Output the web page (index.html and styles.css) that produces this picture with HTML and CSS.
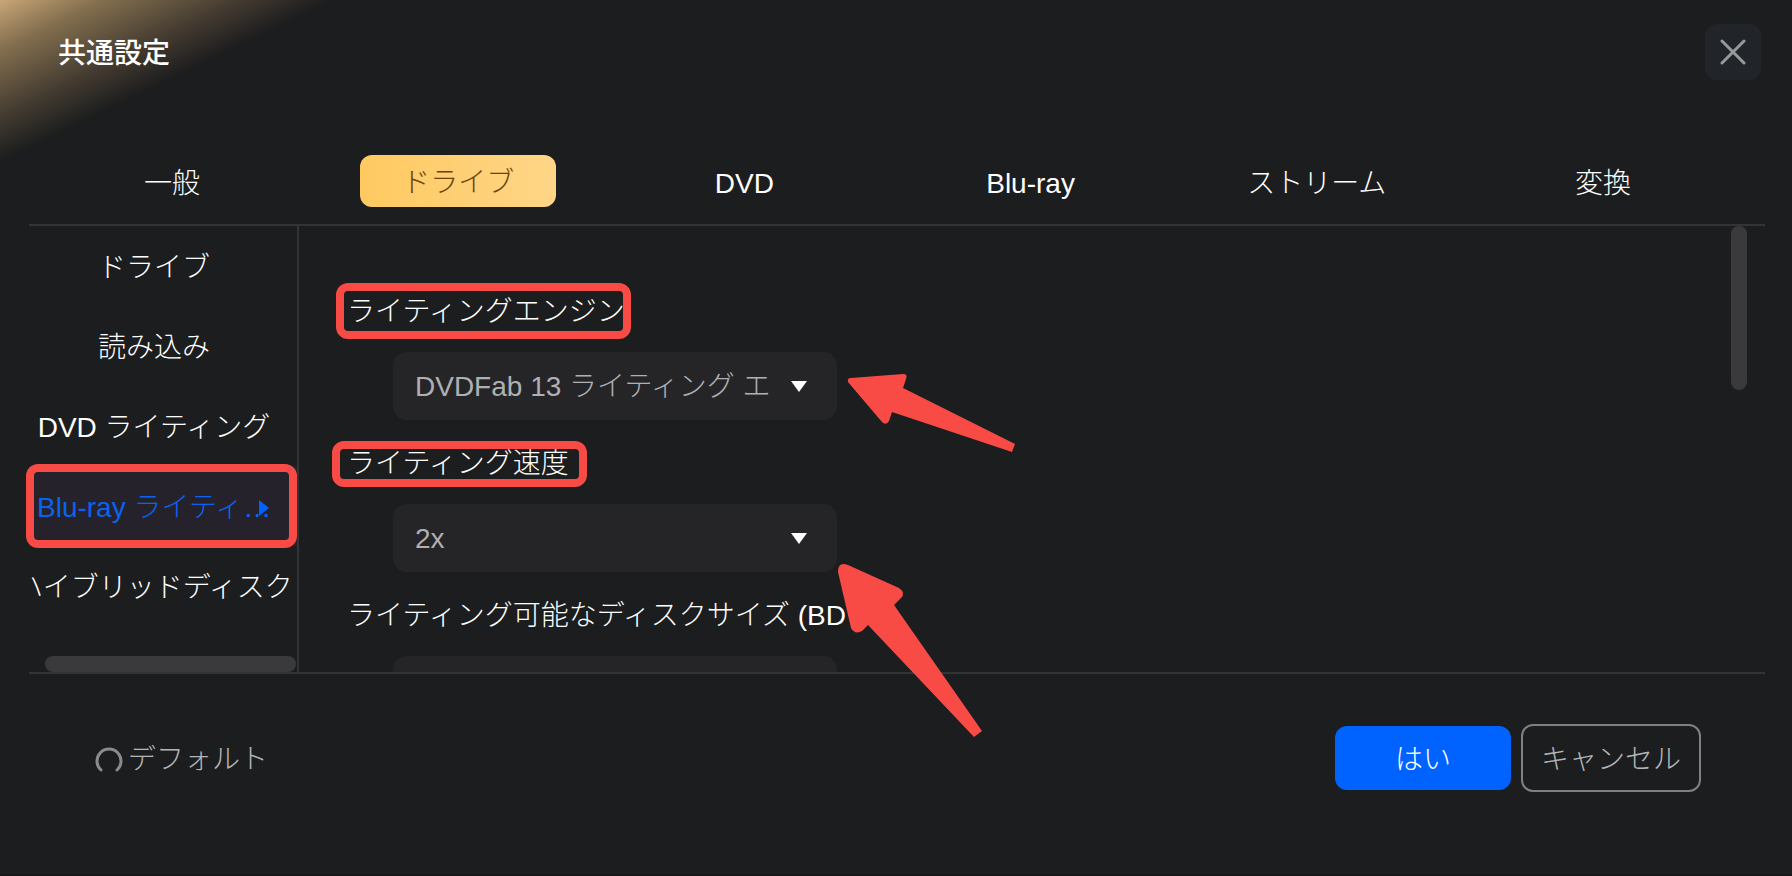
FILE: index.html
```html
<!DOCTYPE html>
<html lang="ja">
  <head>
    <meta charset="UTF-8" />
    <meta name="viewport" content="width=device-width, initial-scale=1.0" />
    <title>共通設定</title>
    <link rel="stylesheet" href="styles.css">
  </head>
  <body>
    <div class="dialog">
      <header class="dialog-header">
        <h1>共通設定</h1>
        <button type="button" class="close-button" aria-label="閉じる">
          <svg width="26" height="26" viewBox="0 0 26 26">
            <path d="M2 2 L24 24 M24 2 L2 24" />
          </svg>
        </button>
      </header>

      <nav class="tabs">
        <button type="button" class="tab">一般</button>
        <button type="button" class="tab active">ドライブ</button>
        <button type="button" class="tab">DVD</button>
        <button type="button" class="tab">Blu-ray</button>
        <button type="button" class="tab">ストリーム</button>
        <button type="button" class="tab">変換</button>
      </nav>

      <div class="dialog-body">
        <aside class="sidebar">
          <a href="#drive" class="side-item">ドライブ</a>
          <a href="#read" class="side-item">読み込み</a>
          <a href="#dvd" class="side-item">DVD ライティング</a>
          <a href="#bluray" class="side-item selected">
            Blu-ray ライティ…
            <svg class="side-arrow" width="10" height="18" viewBox="0 0 10 18">
              <path d="M0 1 L10 9 L0 17 Z" />
            </svg>
          </a>
          <a href="#hybrid" class="side-item">ハイブリッドディスク</a>
          <div class="scroll-x"></div>
        </aside>

        <main class="settings">
          <div class="field">
            <label for="engine"><span class="mark">ライティングエンジン</span></label>
            <div class="select-box">
              <select id="engine">
                <option>DVDFab 13 ライティング エ</option>
              </select>
              <svg class="caret" width="18" height="12" viewBox="0 0 18 12">
                <path d="M1 1 H17 L9 12 Z" />
              </svg>
            </div>
          </div>
          <div class="field">
            <label for="speed"><span class="mark mark-speed">ライティング速度</span></label>
            <div class="select-box">
              <select id="speed">
                <option>2x</option>
              </select>
              <svg class="caret" width="18" height="12" viewBox="0 0 18 12">
                <path d="M1 1 H17 L9 12 Z" />
              </svg>
            </div>
          </div>
          <div class="field">
            <label for="size">ライティング可能なディスクサイズ (BD 50)</label>
            <div class="select-box">
              <select id="size">
                <option></option>
              </select>
            </div>
          </div>
          <div class="scroll-y"></div>
        </main>

        <!-- setas de anotação -->
        <svg class="arrows" width="720" height="400" viewBox="300 340 720 400">
          <path d="M848 382 Q847 378 851 378 L903 374 Q908 374 906 379 L903 388 L1015 444 L1012 452 L892 412 L889 421 Q886 426 882 422 Z" />
          <path d="M838 572 Q838 561 848 565 L899 588 Q906 593 901 598 L894 605 L982 731 L974 737 L868 625 L862 631 Q855 635 851 628 Z" />
        </svg>
      </div>

      <footer class="dialog-footer">
        <button type="button" class="default-button">
          <svg width="30" height="30" viewBox="0 0 30 30">
            <path d="M7 25 A12 12 0 1 1 23 25" />
          </svg>
          デフォルト
        </button>
        <div class="actions">
          <button type="button" class="ok-button">はい</button>
          <button type="button" class="cancel-button">キャンセル</button>
        </div>
      </footer>
    </div>
  </body>
</html>
```

FILE: styles.css
```css
* {
  box-sizing: border-box;
  margin: 0;
  padding: 0;
}

body {
  background-color: #1c1d1e;
  color: #fff;
  font-family: "Liberation Sans", "Noto Sans CJK JP", sans-serif;
  font-size: 28px;
  font-weight: 300;
  line-height: 40px;
}

button,
select {
  font: inherit;
  color: inherit;
  background: none;
  border: none;
  cursor: pointer;
}

.dialog {
  min-height: 100vh;
  background: linear-gradient(154deg, #c9a678 0, #84704f 44px, #453c31 104px, #1c1d1e 146px);
  border-bottom: 2px solid #161718;
  overflow: hidden;
}

.dialog-header {
  display: flex;
  justify-content: space-between;
  align-items: flex-start;
  height: 136px;
  padding: 24px 31px 0 58px;
}

h1 {
  font-size: 28px;
  font-weight: 500;
  line-height: 60px;
}

.close-button {
  display: flex;
  justify-content: center;
  align-items: center;
  width: 56px;
  height: 56px;
  border-radius: 12px;
  background-color: #212529;
}

.close-button svg {
  fill: none;
  stroke: #98999b;
  stroke-width: 3;
  stroke-linecap: round;
}

.tabs {
  display: grid;
  grid-template-columns: repeat(6, 1fr);
  justify-items: center;
  align-items: center;
  height: 90px;
  margin: 0 27px 0 29px;
  padding: 2px 19px 0 0;
  border-bottom: 2px solid #333436;
}

.tab {
  min-width: 196px;
  height: 52px;
  padding-top: 6px;
  border-radius: 12px;
}

.tab.active {
  padding-top: 3px;
  background: linear-gradient(to right, #fec960, #fed688);
  color: #6b4208;
}

.dialog-body {
  position: relative;
  display: flex;
  height: 448px;
  margin: 0 27px 0 29px;
  border-bottom: 2px solid #333436;
}

.sidebar {
  position: relative;
  width: 270px;
  flex: none;
  border-right: 2px solid #333436;
}

.side-item {
  display: flex;
  justify-content: center;
  align-items: center;
  height: 80px;
  padding: 3px 18px 0 0;
  color: #fff;
  text-decoration: none;
  white-space: nowrap;
  overflow: hidden;
}

.side-item.selected {
  position: relative;
  justify-content: flex-start;
  padding-left: 8px;
  background-color: #25222b;
  color: #0a63f0;
  overflow: visible;
}

.side-item.selected::after {
  content: "";
  position: absolute;
  inset: -2px 0 -2px -3px;
  border: 8px solid #f84b46;
  border-radius: 12px;
  z-index: 1;
}

.side-arrow {
  position: absolute;
  left: 230px;
  fill: #0063ff;
}

.scroll-x {
  position: absolute;
  right: 1px;
  bottom: 0;
  width: 251px;
  height: 16px;
  border-radius: 8px;
  background-color: #3a3a3c;
}

.settings {
  position: relative;
  flex: 1;
  padding: 42px 0 0 48px;
  overflow: hidden;
}

.field label {
  display: flex;
  align-items: center;
  height: 84px;
  padding-top: 3px;
  white-space: nowrap;
}

.mark {
  position: relative;
}

.mark::before {
  content: "";
  position: absolute;
  inset: -9px -6px -7px -11px;
  border: 8px solid #f84b46;
  border-radius: 12px;
}

.mark-speed::before {
  inset: -3px -18px -3px -15px;
}

.select-box {
  position: relative;
  width: 444px;
  margin-left: 46px;
}

.select-box select {
  display: block;
  width: 100%;
  height: 68px;
  padding: 2px 56px 0 22px;
  border-radius: 14px;
  background-color: #252527;
  color: #aeb0b3;
  appearance: none;
}

.caret {
  position: absolute;
  right: 29px;
  top: 28px;
  fill: #fff;
  pointer-events: none;
}

.scroll-y {
  position: absolute;
  top: 0;
  right: 18px;
  width: 16px;
  height: 164px;
  border-radius: 8px;
  background-color: #3a3a3c;
}

.arrows {
  position: absolute;
  left: 271px;
  top: 114px;
  fill: #f84b46;
  pointer-events: none;
}

.dialog-footer {
  display: flex;
  justify-content: space-between;
  align-items: center;
  padding: 50px 91px 50px 94px;
}

.default-button {
  display: flex;
  align-items: center;
  gap: 4px;
  padding-top: 3px;
  color: #b4b5b7;
}

.default-button svg {
  fill: none;
  stroke: #8a8b8d;
  stroke-width: 3;
  stroke-linecap: round;
}

.actions {
  display: flex;
  align-items: center;
  gap: 10px;
}

.ok-button {
  width: 176px;
  height: 64px;
  padding-top: 3px;
  border-radius: 12px;
  background-color: #0063ff;
}

.cancel-button {
  width: 180px;
  height: 68px;
  padding-top: 3px;
  border: 2px solid #808083;
  border-radius: 12px;
  color: #b4b5b7;
}
```
